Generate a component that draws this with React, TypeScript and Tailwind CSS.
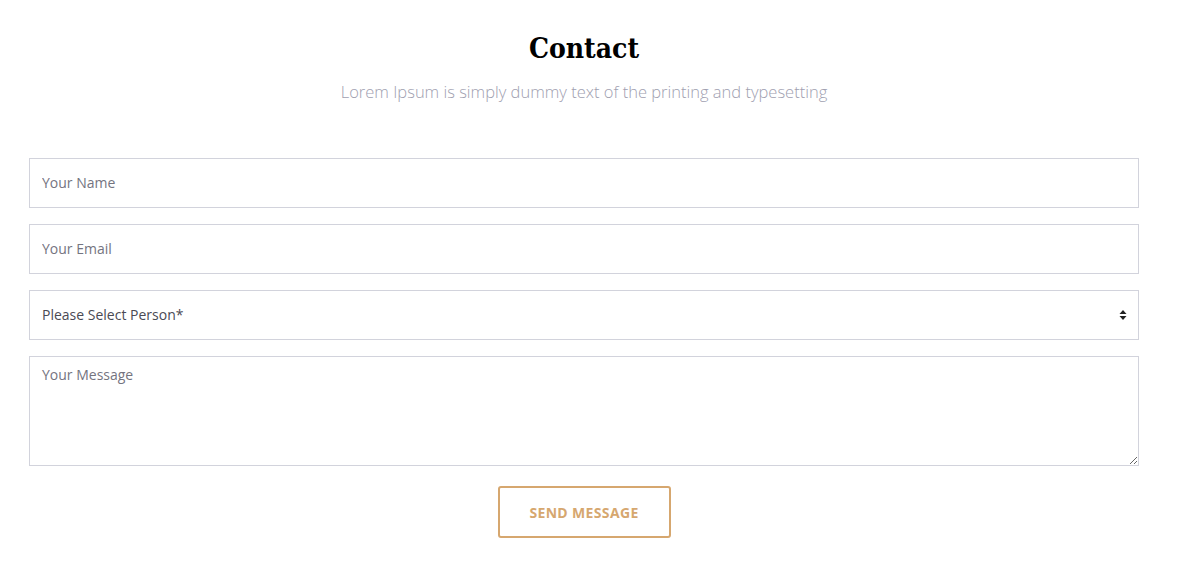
import { useState } from 'react';

const PEOPLE = ['Please Select Person*', 'Sales', 'Support', 'Management'];

export default function App() {
  const [person, setPerson] = useState(PEOPLE[0]);

  return (
    <div className="min-h-screen bg-white font-['Open_Sans',sans-serif]">
      <div className="w-[1110px] ml-[29px] pt-[30px]">
        <h2 className="text-center text-[28px] leading-[38px] font-bold text-black font-['DejaVu_Serif_Condensed','DejaVu_Serif',serif]">
          Contact
        </h2>
        <p className="text-center text-[16.5px] leading-[24px] mt-[12px] text-[#a0a0b0] font-light">
          Lorem Ipsum is simply dummy text of the printing and typesetting
        </p>

        <form className="mt-[54px] flex flex-col gap-4" onSubmit={(e) => e.preventDefault()}>
          <input
            type="text"
            placeholder="Your Name"
            className="h-[50px] w-full border border-[#d2d3dc] px-3 pb-[2px] text-[14px] text-[#495057] placeholder:text-[#74747f] outline-none"
          />
          <input
            type="email"
            placeholder="Your Email"
            className="h-[50px] w-full border border-[#d2d3dc] px-3 pb-[2px] text-[14px] text-[#495057] placeholder:text-[#74747f] outline-none"
          />
          <div className="relative">
            <select
              value={person}
              onChange={(e) => setPerson(e.target.value)}
              className="h-[50px] w-full appearance-none border border-[#d2d3dc] bg-white px-3 pb-[2px] text-[14px] text-[#4a4a54] outline-none"
            >
              {PEOPLE.map((p) => (
                <option key={p}>{p}</option>
              ))}
            </select>
            <svg className="absolute right-[12px] top-[19px] pointer-events-none" width="8" height="12" viewBox="0 0 8 12">
              <path d="M4 1 L7.5 5 L0.5 5 Z M4 11 L0.5 7 L7.5 7 Z" fill="#222" />
            </svg>
          </div>
          <textarea
            placeholder="Your Message"
            className="h-[110px] w-full border border-[#d2d3dc] px-3 pt-[7px] text-[14px] text-[#495057] placeholder:text-[#74747f] outline-none"
          />
          <div className="flex justify-center mt-[4px]">
            <button
              type="submit"
              className="w-[173px] h-[52px] border-2 border-[#d6a76f] rounded-[3px] bg-white text-[14px] font-bold text-[#d6a76f] tracking-wide uppercase"
            >
              Send Message
            </button>
          </div>
        </form>
      </div>
    </div>
  );
}
